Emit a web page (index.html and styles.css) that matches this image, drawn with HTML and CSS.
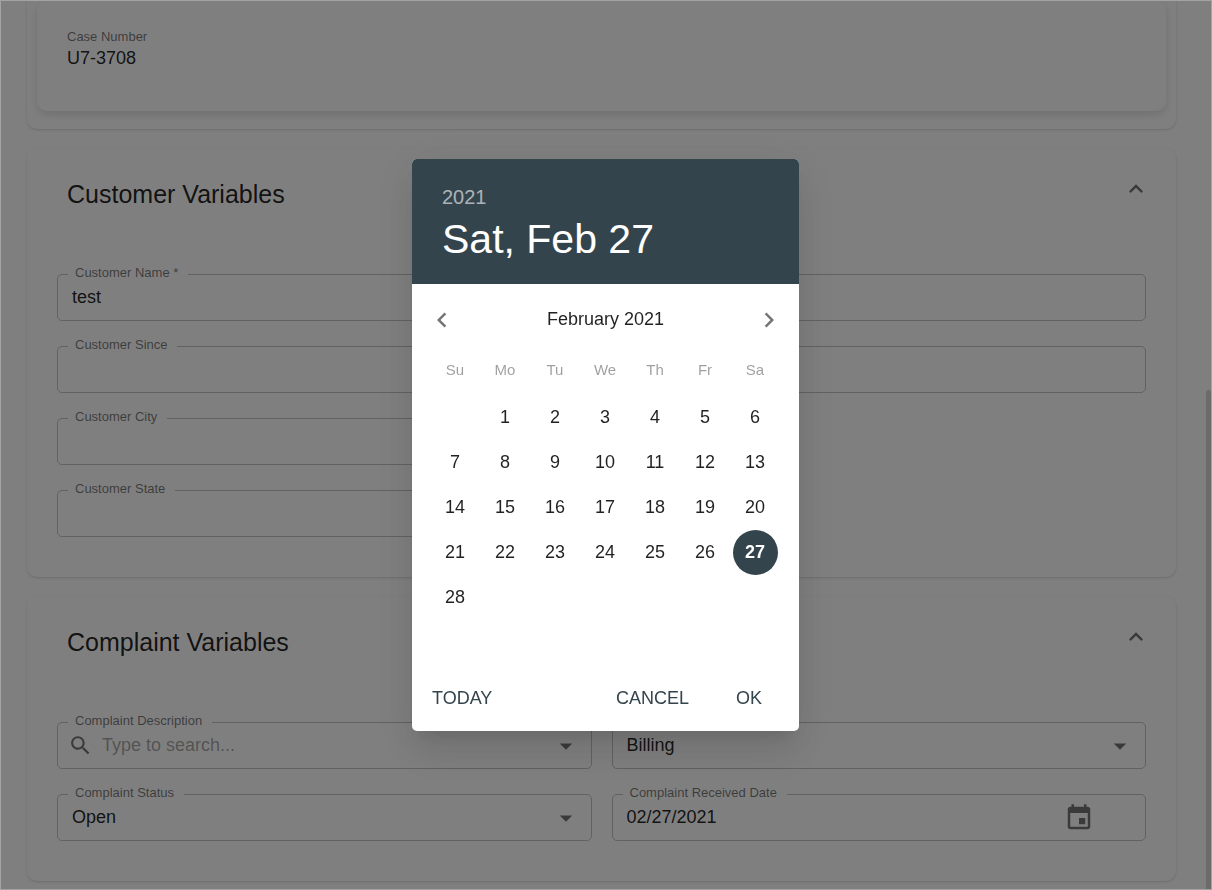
FILE: index.html
```html
<!DOCTYPE html>
<html lang="en">
<head>
<meta charset="utf-8">
<title>Case U7-3708</title>
<meta name="viewport" content="width=device-width, initial-scale=1">
<link rel="stylesheet" href="styles.css">
</head>
<body>
<main class="page">
  <section class="card card-first">
    <dl class="summary">
      <dt class="summary-label">Case Number</dt>
      <dd class="summary-value">U7-3708</dd>
    </dl>
  </section>

  <section class="card">
    <header class="card-header">
      <h2 class="card-title">Customer Variables</h2>
      <button class="icon-button collapse" type="button" aria-label="Collapse Customer Variables">
        <svg class="icon icon-medium" viewBox="0 0 24 24"><path d="M12 8l-6 6 1.41 1.41L12 10.83l4.59 4.58L18 14z"/></svg>
      </button>
    </header>
    <div class="fields">
      <div class="field">
        <label class="field-label" for="name">Customer Name <span class="required">*</span></label>
        <input class="field-input" id="name" type="text" value="test">
      </div>
      <div class="field"><input class="field-input" type="text" aria-label="Customer Address"></div>
      <div class="field">
        <label class="field-label" for="since">Customer Since</label>
        <input class="field-input" id="since" type="text">
      </div>
      <div class="field"><input class="field-input" type="text" aria-label="Customer Zip"></div>
      <div class="field field-left">
        <label class="field-label" for="city">Customer City</label>
        <input class="field-input" id="city" type="text">
      </div>
      <div class="field field-left">
        <label class="field-label" for="state">Customer State</label>
        <input class="field-input" id="state" type="text">
      </div>
    </div>
  </section>

  <section class="card">
    <header class="card-header">
      <h2 class="card-title">Complaint Variables</h2>
      <button class="icon-button collapse" type="button" aria-label="Collapse Complaint Variables">
        <svg class="icon icon-medium" viewBox="0 0 24 24"><path d="M12 8l-6 6 1.41 1.41L12 10.83l4.59 4.58L18 14z"/></svg>
      </button>
    </header>
    <div class="fields">
      <div class="field field-search">
        <label class="field-label" for="description">Complaint Description</label>
        <svg class="icon icon-small" viewBox="0 0 24 24"><path d="M15.5 14h-.79l-.28-.27C15.41 12.59 16 11.11 16 9.5 16 5.91 13.09 3 9.5 3S3 5.91 3 9.5 5.91 16 9.5 16c1.61 0 3.09-.59 4.23-1.57l.27.28v.79l5 4.99L20.49 19l-4.99-5zm-6 0C7.01 14 5 11.99 5 9.5S7.01 5 9.5 5 14 7.01 14 9.5 11.99 14 9.5 14z"/></svg>
        <input class="field-input" id="description" type="text" placeholder="Type to search...">
        <svg class="icon field-arrow" viewBox="0 0 24 24"><path d="M7 10l5 5 5-5z"/></svg>
      </div>
      <div class="field">
        <select class="field-input" aria-label="Complaint Category"><option>Billing</option></select>
        <svg class="icon field-arrow" viewBox="0 0 24 24"><path d="M7 10l5 5 5-5z"/></svg>
      </div>
      <div class="field">
        <label class="field-label" for="status">Complaint Status</label>
        <select class="field-input" id="status"><option>Open</option></select>
        <svg class="icon field-arrow" viewBox="0 0 24 24"><path d="M7 10l5 5 5-5z"/></svg>
      </div>
      <div class="field field-date">
        <label class="field-label" for="received">Complaint Received Date</label>
        <input class="field-input" id="received" type="text" value="02/27/2021">
        <button class="icon-button" type="button" aria-label="Choose date">
          <svg class="icon" viewBox="0 0 24 24"><path d="M17 12h-5v5h5v-5zM16 1v2H8V1H6v2H5c-1.11 0-1.99.9-1.99 2L3 19c0 1.1.89 2 2 2h14c1.1 0 2-.9 2-2V5c0-1.1-.9-2-2-2h-1V1h-2zm3 18H5V8h14v11z"/></svg>
        </button>
      </div>
    </div>
  </section>
  <div class="scroll-thumb"></div>
</main>

<div class="overlay">
  <div class="picker" role="dialog" aria-modal="true" aria-label="Choose date">
    <div class="picker-header">
      <button class="picker-year" type="button">2021</button>
      <button class="picker-date" type="button">Sat, Feb 27</button>
    </div>
    <div class="month-bar">
      <button class="icon-button" type="button" aria-label="Previous month">
        <svg class="icon" viewBox="0 0 24 24"><path d="M15.41 7.41L14 6l-6 6 6 6 1.41-1.41L10.83 12z"/></svg>
      </button>
      <span class="month-name">February 2021</span>
      <button class="icon-button" type="button" aria-label="Next month">
        <svg class="icon" viewBox="0 0 24 24"><path d="M8.59 16.59L13.17 12 8.59 7.41 10 6l6 6-6 6z"/></svg>
      </button>
    </div>
    <table class="calendar">
      <thead>
        <tr><th>Su</th><th>Mo</th><th>Tu</th><th>We</th><th>Th</th><th>Fr</th><th>Sa</th></tr>
      </thead>
      <tbody>
        <tr><td></td><td><button class="day" type="button">1</button></td><td><button class="day" type="button">2</button></td><td><button class="day" type="button">3</button></td><td><button class="day" type="button">4</button></td><td><button class="day" type="button">5</button></td><td><button class="day" type="button">6</button></td></tr>
        <tr><td><button class="day" type="button">7</button></td><td><button class="day" type="button">8</button></td><td><button class="day" type="button">9</button></td><td><button class="day" type="button">10</button></td><td><button class="day" type="button">11</button></td><td><button class="day" type="button">12</button></td><td><button class="day" type="button">13</button></td></tr>
        <tr><td><button class="day" type="button">14</button></td><td><button class="day" type="button">15</button></td><td><button class="day" type="button">16</button></td><td><button class="day" type="button">17</button></td><td><button class="day" type="button">18</button></td><td><button class="day" type="button">19</button></td><td><button class="day" type="button">20</button></td></tr>
        <tr><td><button class="day" type="button">21</button></td><td><button class="day" type="button">22</button></td><td><button class="day" type="button">23</button></td><td><button class="day" type="button">24</button></td><td><button class="day" type="button">25</button></td><td><button class="day" type="button">26</button></td><td><button class="day day-selected" type="button" aria-pressed="true">27</button></td></tr>
        <tr><td><button class="day" type="button">28</button></td><td></td><td></td><td></td><td></td><td></td><td></td></tr>
        <tr><td></td><td></td><td></td><td></td><td></td><td></td><td></td></tr>
      </tbody>
    </table>
    <div class="actions">
      <button class="action action-start" type="button">TODAY</button>
      <button class="action" type="button">CANCEL</button>
      <button class="action" type="button">OK</button>
    </div>
  </div>
</div>
</body>
</html>
```
FILE: styles.css
```css
* {
  box-sizing: border-box;
}

body {
  margin: 0;
  background: #fefefe;
  color: rgba(0, 0, 0, 0.87);
  font: 18px/24px "Liberation Sans", Arial, sans-serif;
}

button,
input,
select {
  margin: 0;
  padding: 0;
  border: 0;
  background: none;
  color: inherit;
  font: inherit;
}

button {
  cursor: pointer;
}

/* Page and cards */
.page {
  position: relative;
  display: flex;
  flex-direction: column;
  gap: 19px;
  padding: 0 36px 9px 27px;
}

.card {
  padding: 0 30px 40px;
  border-radius: 10px;
  background: #fff;
  box-shadow: 0 1px 3px rgba(0, 0, 0, 0.08), 0 1px 2px rgba(0, 0, 0, 0.08);
}

.card-first {
  padding: 1px 10px 18px;
  border-radius: 0 0 10px 10px;
}

.summary {
  margin: 0;
  padding: 27px 30px 41px;
  border-radius: 10px;
  box-shadow: 0 4px 8px rgba(0, 0, 0, 0.12);
}

.summary-label {
  color: rgba(0, 0, 0, 0.54);
  font-size: 13px;
  line-height: 18px;
}

.summary-value {
  margin: 0;
}

.card-header {
  display: flex;
  align-items: flex-start;
  justify-content: space-between;
  padding: 27px 0 61px 10px;
}

.card-title {
  margin: 0;
  font-size: 25px;
  font-weight: 400;
  line-height: 38px;
}

.collapse {
  margin-right: -4px;
}

.icon-button {
  display: flex;
  flex: none;
}

.icon {
  flex: none;
  width: 30px;
  height: 30px;
  fill: rgba(0, 0, 0, 0.54);
}

.icon-medium {
  width: 28px;
  height: 28px;
}

.icon-small {
  width: 25px;
  height: 25px;
}

/* Form fields */
.fields {
  display: grid;
  grid-template-columns: 1fr 1fr;
  gap: 25px 20px;
}

.field {
  position: relative;
  display: flex;
  align-items: center;
  height: 47px;
  border: 1px solid rgba(0, 0, 0, 0.23);
  border-radius: 5px;
}

.field-left {
  grid-column: 1;
}

.field-label {
  position: absolute;
  top: -10px;
  left: 10px;
  padding: 0 10px 0 7px;
  background: #fff;
  color: rgba(0, 0, 0, 0.54);
  font-size: 13px;
  line-height: 16px;
}

.field-input {
  flex: 1;
  min-width: 0;
  height: 100%;
  padding: 0 14px;
  outline: 0;
  appearance: none;
}

select.field-input {
  padding-bottom: 2px;
}

.field-input::placeholder {
  color: rgba(0, 0, 0, 0.37);
  opacity: 1;
}

.field-search {
  padding-left: 10px;
}

.field-search .field-input {
  padding: 0 9px;
}

.field-date {
  padding-right: 51px;
}

.field-arrow {
  position: absolute;
  right: 10px;
  pointer-events: none;
}

.scroll-thumb {
  position: absolute;
  top: 390px;
  right: 1px;
  bottom: 0;
  width: 5px;
  border-radius: 3px 3px 0 0;
  background: #d6d6d6;
}

/* Date picker */
.overlay {
  position: fixed;
  inset: 0;
  display: flex;
  align-items: center;
  justify-content: center;
  padding-right: 1px;
  border: 1px solid #a3a3a3;
  background: rgba(0, 0, 0, 0.5);
  background-clip: padding-box;
}

.picker {
  padding-bottom: 1px;
  border-radius: 5px;
  overflow: hidden;
  background: #fff;
  box-shadow: 0 11px 15px -7px rgba(0, 0, 0, 0.1), 0 24px 38px 3px rgba(0, 0, 0, 0.07), 0 9px 46px 8px rgba(0, 0, 0, 0.06);
}

.picker-header {
  display: flex;
  flex-direction: column;
  align-items: flex-start;
  padding: 23px 30px 18px;
  background: #34444c;
  color: #fff;
}

.picker-year {
  color: rgba(255, 255, 255, 0.6);
  font-size: 20px;
  line-height: 30px;
}

.picker-date {
  font-size: 41px;
  line-height: 54px;
}

.month-bar {
  display: flex;
  align-items: center;
  justify-content: space-between;
  padding: 21px 15px 20px;
}

.month-name {
  padding-bottom: 2px;
}

.calendar {
  margin: 0 19px 0 18px;
  border-spacing: 0;
  table-layout: fixed;
}

.calendar th {
  width: 50px;
  height: 40px;
  padding: 0 0 10px;
  color: rgba(0, 0, 0, 0.38);
  font-size: 15px;
  font-weight: 400;
}

.calendar td {
  width: 50px;
  height: 45px;
  padding: 0;
  text-align: center;
}

.day {
  display: block;
  width: 45px;
  height: 45px;
  margin: 0 auto;
  padding-bottom: 2px;
  border-radius: 50%;
}

.day-selected {
  background: #34444c;
  color: #fff;
  font-weight: 700;
}

.actions {
  display: flex;
  gap: 10px;
  padding: 10px;
}

.action {
  min-width: 80px;
  height: 45px;
  padding: 0 10px;
  color: #34444c;
}

.action-start {
  margin-right: auto;
}
```
